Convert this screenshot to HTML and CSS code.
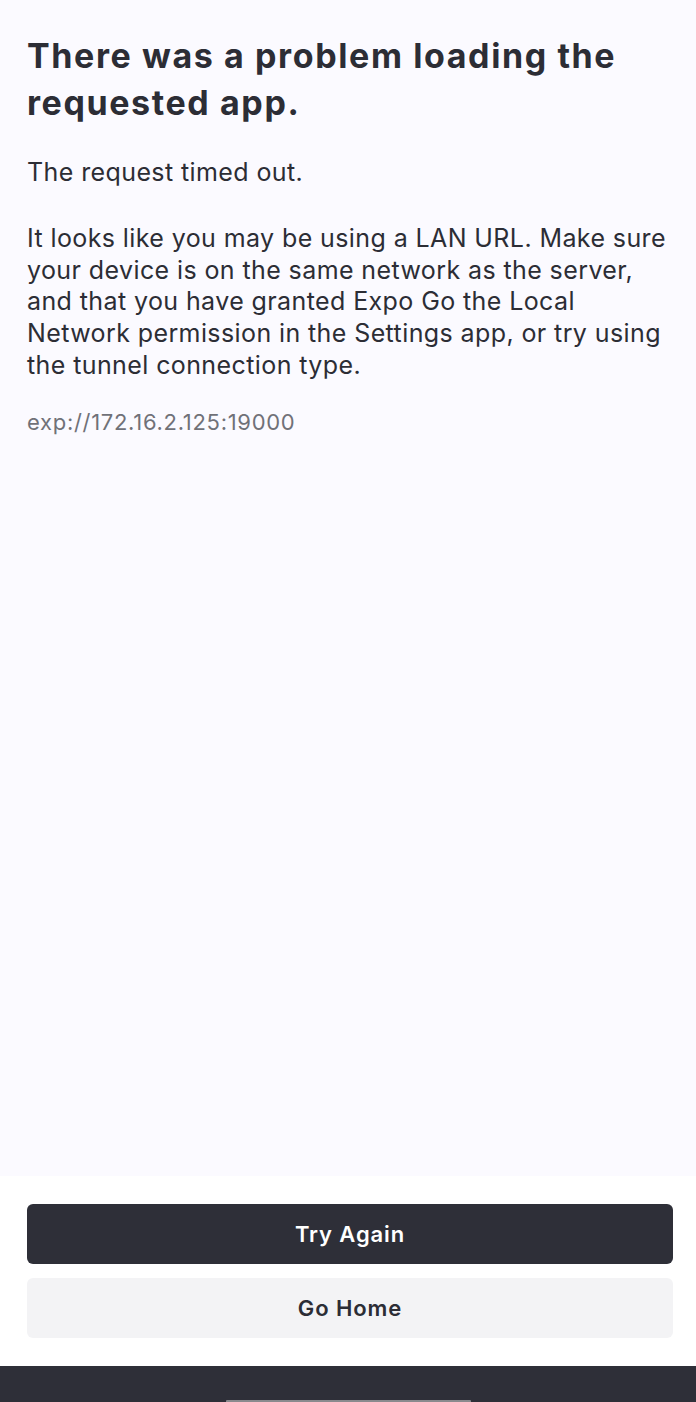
FILE: index.html
```html
<!DOCTYPE html>
<html lang="en">
<head>
	<meta charset="UTF-8">
	<title>Error</title>
	<link rel="stylesheet" href="styles.css">
</head>
<body>
	<div class="screen">
		<div class="content">
			<h1 class="title">There was a problem loading the requested app.</h1>
			<p class="message">The request timed out.</p>
			<p class="message hint">It looks like you may be using a LAN URL. Make sure your device is on the same network as the server, and that you have granted Expo Go the Local Network permission in the Settings app, or try using the tunnel connection type.</p>
			<p class="url">exp://172.16.2.125:19000</p>
		</div>
		<div class="actions">
			<button class="btn btn-primary">Try Again</button>
			<button class="btn btn-secondary">Go Home</button>
		</div>
		<div class="home-bar">
			<span class="home-indicator"></span>
		</div>
	</div>
</body>
</html>
```

FILE: styles.css
```css
body {
	margin: 0;
	padding: 0;
	font-family: Inter, "Noto Sans", sans-serif;
	color: #2c2d35;
}
.screen {
	display: flex;
	flex-direction: column;
	height: 1402px;
}
.content {
	flex: 1;
	background: #fbfaff;
	padding: 32px 22px 0 27px;
}
.title {
	margin: 0 0 31px;
	font-size: 34px;
	line-height: 47px;
	font-weight: 700;
	letter-spacing: 1.6px;
}
.message {
	margin: 0 0 34px;
	font-size: 25px;
	line-height: 31.75px;
	font-weight: 400;
	letter-spacing: 0.4px;
}
.message.hint {
	margin-bottom: 26px;
}
.url {
	margin: 0;
	font-size: 22px;
	line-height: 28px;
	color: #707178;
	letter-spacing: 0.7px;
}
.actions {
	display: flex;
	flex-direction: column;
	gap: 14px;
	padding: 28px 23px 28px 27px;
	background: #fff;
}
.btn {
	height: 60px;
	border: none;
	border-radius: 6px;
	font-family: Inter, "Noto Sans", sans-serif;
	font-size: 22px;
	font-weight: 600;
	letter-spacing: 0.9px;
}
.btn-primary {
	background: #2e2f38;
	color: #fff;
}
.btn-secondary {
	background: #f3f3f5;
	color: #2c2d35;
}
.home-bar {
	height: 36px;
	background: #2e2f38;
	display: flex;
	justify-content: center;
	align-items: flex-end;
}
.home-indicator {
	width: 245px;
	height: 2px;
	background: #8a8a8e;
	border-radius: 1px 1px 0 0;
}
```
